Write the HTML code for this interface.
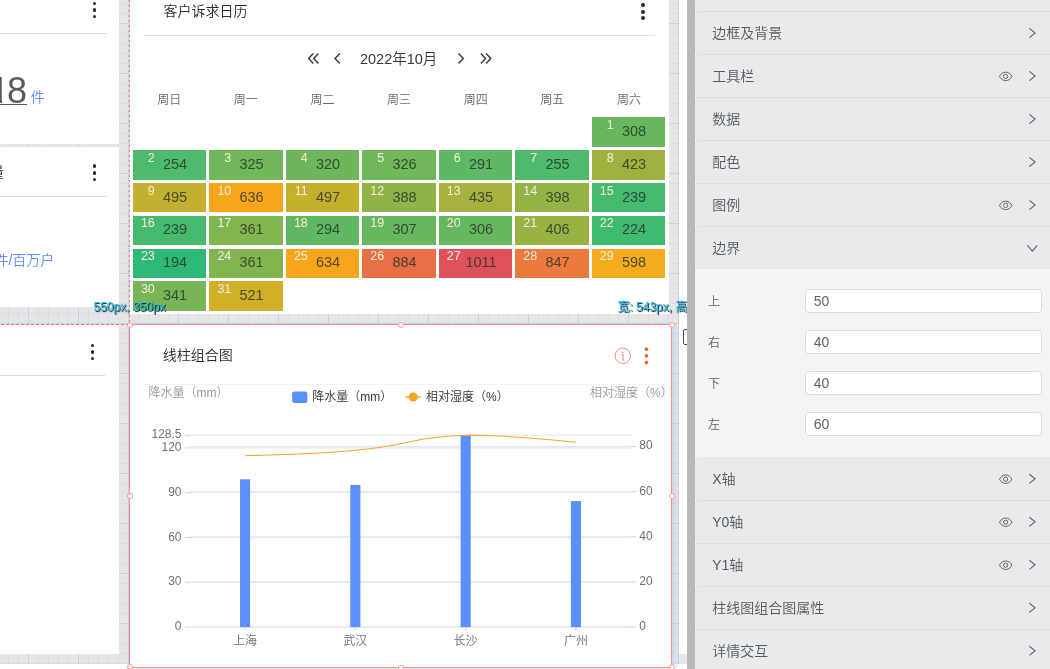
<!DOCTYPE html>
<html lang="zh-CN"><head><meta charset="utf-8"><title>dashboard</title>
<style>
*{box-sizing:border-box;margin:0;padding:0}
html,body{width:1050px;height:669px;overflow:hidden;background:#fff}
body{position:relative;font-family:"Liberation Sans","Noto Sans CJK SC",sans-serif;color:#333;font-weight:350}
#root{position:absolute;left:0;top:0;width:1050px;height:669px;overflow:hidden;will-change:transform}
.abs{position:absolute}
#canvas{position:absolute;left:0;top:0;width:679.2px;height:663.8px;background-color:#e6e6e6;
background-image:
 linear-gradient(to right,rgba(150,185,240,.3) 1px,transparent 1px),
 linear-gradient(to bottom,rgba(150,185,240,.3) 1px,transparent 1px),
 linear-gradient(to right,rgba(150,185,240,.185) 1px,transparent 1px),
 linear-gradient(to bottom,rgba(150,185,240,.185) 1px,transparent 1px);
background-size:50px 50px,50px 50px,10px 10px,10px 10px;
background-position:28px 0,0 23px,8px 0,0 3px;}
.card{position:absolute;background:#fff}
.dots{position:absolute;width:4px}
.dots i{position:absolute;left:-0.1px;width:3.8px;height:3.8px;margin-top:-0.1px;border-radius:50%;background:#2a2a1e}
.hr{position:absolute;height:1px;background:#dcdcdc}
.t14{position:absolute;font-size:14px;line-height:20px;white-space:nowrap}
.wk{position:absolute;width:60px;text-align:center;font-size:12px;line-height:16px;color:#666;top:91.8px}
.cell{position:absolute;width:73.6px;height:29.4px}
.dn{position:absolute;right:51.4px;top:0.7px;font-size:12.5px;line-height:14px;color:#f1f0dc;white-space:nowrap}
.dv{position:absolute;left:12.5px;width:60px;text-align:center;top:4.6px;font-size:14.5px;line-height:18px;color:rgba(35,48,40,.78);white-space:nowrap}
.tag{position:absolute;font-size:12px;line-height:14px;color:#22c0f2;white-space:nowrap;text-shadow:1px 1px 1px rgba(0,0,0,.95)}
.handle{position:absolute;width:6.2px;height:6.2px;border-radius:50%;background:#fff;border:1px solid #ff9a85}
svg{position:absolute;overflow:visible}
/* panel */
#gut1{position:absolute;left:679.2px;top:0;width:8px;height:669px;background:#fff;overflow:hidden}
#gut2{position:absolute;left:687.2px;top:0;width:7.7px;height:669px;background:#b9b9b9}
#panel{position:absolute;left:694.9px;top:0;width:355.1px;height:669px;background:#e9eaec;overflow:hidden}
.row{position:absolute;left:0;width:100%;height:43px;background:linear-gradient(#dedfe2,#dedfe2) 2.5px 0/100% 1px no-repeat}
.row::before{content:"";position:absolute;left:0;top:-2px;border-left:2.6px solid #f7f7f7;border-top:2.5px solid transparent;border-bottom:2.5px solid transparent}
.row.nl{background:none}
.row span{position:absolute;left:17.3px;top:12.4px;font-size:14px;line-height:20px;color:#55595f;white-space:nowrap}
.sec{position:absolute;left:0;width:100%;background:#f4f4f5}
.lab{position:absolute;left:13px;font-size:12px;line-height:16px;color:#606266}
.inp{position:absolute;left:110.3px;width:236.4px;height:23.6px;border:1px solid #d9dbdf;border-radius:4px;background:#fff;font-size:14px;line-height:21.6px;padding-top:.8px;padding-left:7.5px;color:#606266}

</style></head>
<body>
<div id="root">
<div id="canvas">
<!-- left cards -->
<div class="card" style="left:0;top:0;width:119.3px;height:144.3px">
  <div class="dots" style="left:92.7px;top:0"><i style="top:1.6px"></i><i style="top:8.2px"></i><i style="top:14.6px"></i></div>
  <div class="hr" style="left:0;top:33px;width:107px"></div>
  <div class="abs" style="left:0;top:70px;width:1.9px;height:42px;overflow:hidden"><div class="abs" style="left:-10.6px;top:0;font-size:36px;line-height:42px;color:#5a5a5a;white-space:nowrap">1</div></div>
  <div class="abs" style="left:7px;top:70px;font-size:36px;line-height:42px;color:#5a5a5a;white-space:nowrap">8</div>
  <div class="abs" style="left:0;top:103.9px;width:26.9px;height:1.2px;background:#5a5a5a"></div>
  <div class="abs" style="left:30.8px;top:87.5px;font-size:14px;line-height:18px;color:#5b8ff9">件</div>
</div>
<div class="card" style="left:0;top:146.6px;width:119.3px;height:160.2px">
  <div class="t14" style="left:-10px;top:15px;color:#222">量</div>
  <div class="dots" style="left:92.7px;top:0"><i style="top:17.8px"></i><i style="top:24.6px"></i><i style="top:31.2px"></i></div>
  <div class="hr" style="left:0;top:49px;width:107px"></div>
  <div class="t14" style="left:-5.6px;top:103px;color:#5b8ff9">件/百万户</div>
</div>
<div class="card" style="left:0;top:324.5px;width:119.3px;height:329.8px">
  <div class="dots" style="left:90.6px;top:0"><i style="top:19.1px"></i><i style="top:25.7px"></i><i style="top:32.1px"></i></div>
  <div class="hr" style="left:0;top:50.5px;width:105px"></div>
</div>
<!-- calendar card -->
<div class="card" style="left:129.5px;top:0;width:539.6px;height:314.1px"></div>
<div class="t14" style="left:163.5px;top:1px;color:#2b2b2b">客户诉求日历</div>
<div class="dots" style="left:640.8px;top:0"><i style="top:3.1px"></i><i style="top:9.8px"></i><i style="top:16.5px"></i></div>
<div class="hr" style="left:143px;top:35px;width:512px;background:#e2e2e2"></div>
<svg style="left:300px;top:48px" width="200" height="22" viewBox="300 48 200 22" fill="none" stroke="#3d4039" stroke-width="1.5">
  <path d="M313.2 53.5 L308.6 58.5 L313.2 63.5 M318.4 53.5 L313.8 58.5 L318.4 63.5"/>
  <path d="M339.9 53.5 L335 58.5 L339.9 63.5"/>
  <path d="M458.5 53.5 L463.4 58.5 L458.5 63.5"/>
  <path d="M480.9 53.5 L485.5 58.5 L480.9 63.5 M486.1 53.5 L490.7 58.5 L486.1 63.5"/>
</svg>
<div class="abs" style="left:338.7px;top:49px;width:120px;text-align:center;font-size:14.5px;line-height:20px;color:#353a35;white-space:nowrap">2022年10月</div>
<div class="wk" style="left:139.3px">周日</div>
<div class="wk" style="left:215.7px">周一</div>
<div class="wk" style="left:292.4px">周二</div>
<div class="wk" style="left:369px">周三</div>
<div class="wk" style="left:445.7px">周四</div>
<div class="wk" style="left:522.3px">周五</div>
<div class="wk" style="left:599px">周六</div>
<div class="cell" style="left:591.5px;top:117.4px;background:rgb(104,183,94)"><span class="dn">1</span><span class="dv">308</span></div>
<div class="cell" style="left:132.6px;top:150.2px;background:rgb(77,186,108)"><span class="dn">2</span><span class="dv">254</span></div>
<div class="cell" style="left:209.1px;top:150.2px;background:rgb(112,182,90)"><span class="dn">3</span><span class="dv">325</span></div>
<div class="cell" style="left:285.6px;top:150.2px;background:rgb(110,182,91)"><span class="dn">4</span><span class="dv">320</span></div>
<div class="cell" style="left:362.0px;top:150.2px;background:rgb(112,182,90)"><span class="dn">5</span><span class="dv">326</span></div>
<div class="cell" style="left:438.5px;top:150.2px;background:rgb(95,184,99)"><span class="dn">6</span><span class="dv">291</span></div>
<div class="cell" style="left:515.0px;top:150.2px;background:rgb(77,186,108)"><span class="dn">7</span><span class="dv">255</span></div>
<div class="cell" style="left:591.5px;top:150.2px;background:rgb(161,177,64)"><span class="dn">8</span><span class="dv">423</span></div>
<div class="cell" style="left:132.6px;top:183.0px;background:rgb(196,176,46)"><span class="dn">9</span><span class="dv">495</span></div>
<div class="cell" style="left:209.1px;top:183.0px;background:rgb(246,165,28)"><span class="dn">10</span><span class="dv">636</span></div>
<div class="cell" style="left:285.6px;top:183.0px;background:rgb(197,176,46)"><span class="dn">11</span><span class="dv">497</span></div>
<div class="cell" style="left:362.0px;top:183.0px;background:rgb(144,179,73)"><span class="dn">12</span><span class="dv">388</span></div>
<div class="cell" style="left:438.5px;top:183.0px;background:rgb(167,177,61)"><span class="dn">13</span><span class="dv">435</span></div>
<div class="cell" style="left:515.0px;top:183.0px;background:rgb(148,178,70)"><span class="dn">14</span><span class="dv">398</span></div>
<div class="cell" style="left:591.5px;top:183.0px;background:rgb(69,186,110)"><span class="dn">15</span><span class="dv">239</span></div>
<div class="cell" style="left:132.6px;top:215.8px;background:rgb(69,186,110)"><span class="dn">16</span><span class="dv">239</span></div>
<div class="cell" style="left:209.1px;top:215.8px;background:rgb(130,180,80)"><span class="dn">17</span><span class="dv">361</span></div>
<div class="cell" style="left:285.6px;top:215.8px;background:rgb(97,184,98)"><span class="dn">18</span><span class="dv">294</span></div>
<div class="cell" style="left:362.0px;top:215.8px;background:rgb(103,183,95)"><span class="dn">19</span><span class="dv">307</span></div>
<div class="cell" style="left:438.5px;top:215.8px;background:rgb(103,183,95)"><span class="dn">20</span><span class="dv">306</span></div>
<div class="cell" style="left:515.0px;top:215.8px;background:rgb(152,178,68)"><span class="dn">21</span><span class="dv">406</span></div>
<div class="cell" style="left:591.5px;top:215.8px;background:rgb(62,186,113)"><span class="dn">22</span><span class="dv">224</span></div>
<div class="cell" style="left:132.6px;top:248.6px;background:rgb(46,186,118)"><span class="dn">23</span><span class="dv">194</span></div>
<div class="cell" style="left:209.1px;top:248.6px;background:rgb(130,180,80)"><span class="dn">24</span><span class="dv">361</span></div>
<div class="cell" style="left:285.6px;top:248.6px;background:rgb(246,165,28)"><span class="dn">25</span><span class="dv">634</span></div>
<div class="cell" style="left:362.0px;top:248.6px;background:rgb(232,112,70)"><span class="dn">26</span><span class="dv">884</span></div>
<div class="cell" style="left:438.5px;top:248.6px;background:rgb(224,82,90)"><span class="dn">27</span><span class="dv">1011</span></div>
<div class="cell" style="left:515.0px;top:248.6px;background:rgb(236,122,62)"><span class="dn">28</span><span class="dv">847</span></div>
<div class="cell" style="left:591.5px;top:248.6px;background:rgb(245,171,30)"><span class="dn">29</span><span class="dv">598</span></div>
<div class="cell" style="left:132.6px;top:281.4px;background:rgb(120,181,86)"><span class="dn">30</span><span class="dv">341</span></div>
<div class="cell" style="left:209.1px;top:281.4px;background:rgb(209,175,40)"><span class="dn">31</span><span class="dv">521</span></div>
<!-- chart widget -->
<div class="card" style="left:129px;top:324px;width:543px;height:344.2px;border:1px solid #fc8a86;box-shadow:3px 2px 5px rgba(120,170,230,.25)"></div>
<div class="t14" style="left:162.7px;top:344.7px;color:#2b2b2b">线柱组合图</div>
<div class="hr" style="left:143px;top:384px;width:515px;background:#f4f4f4"></div>
<svg style="left:0;top:0" width="679" height="669" viewBox="0 0 679 669" font-family="Liberation Sans, Noto Sans CJK SC, sans-serif" font-size="12">
<circle cx="622.8" cy="355.8" r="7.7" fill="none" stroke="#ff7a76" stroke-width="0.9"/>
<path d="M621.6 354.3 H623 V360.2 H624.4" fill="none" stroke="#f4716c" stroke-width="0.9"/><circle cx="622.8" cy="352.4" r="0.7" fill="#f4716c"/>
<circle cx="646.5" cy="349.3" r="1.8" fill="#e2622a"/>
<circle cx="646.5" cy="355.9" r="1.8" fill="#e2622a"/>
<circle cx="646.5" cy="362.6" r="1.8" fill="#e2622a"/>
<path d="M189.8 627.1 H631.1" stroke="#e4e9f2" stroke-width="1.3"/>
<path d="M184.8 627.1 H189.8" stroke="#c9d3e4" stroke-width="1"/>
<text x="181.5" y="630.1" text-anchor="end" fill="#6e7079">0</text>
<path d="M189.8 582.3 H631.1" stroke="#e4e9f2" stroke-width="1.3"/>
<path d="M184.8 582.3 H189.8" stroke="#c9d3e4" stroke-width="1"/>
<text x="181.5" y="585.3" text-anchor="end" fill="#6e7079">30</text>
<path d="M189.8 537.5 H631.1" stroke="#e4e9f2" stroke-width="1.3"/>
<path d="M184.8 537.5 H189.8" stroke="#c9d3e4" stroke-width="1"/>
<text x="181.5" y="540.5" text-anchor="end" fill="#6e7079">60</text>
<path d="M189.8 492.7 H631.1" stroke="#e4e9f2" stroke-width="1.3"/>
<path d="M184.8 492.7 H189.8" stroke="#c9d3e4" stroke-width="1"/>
<text x="181.5" y="495.7" text-anchor="end" fill="#6e7079">90</text>
<path d="M189.8 447.9 H631.1" stroke="#e4e9f2" stroke-width="1.3"/>
<path d="M184.8 447.9 H189.8" stroke="#c9d3e4" stroke-width="1"/>
<text x="181.5" y="450.9" text-anchor="end" fill="#6e7079">120</text>
<path d="M189.8 435.2 H631.1" stroke="#e4e9f2" stroke-width="1.3"/>
<path d="M184.8 435.2 H189.8" stroke="#c9d3e4" stroke-width="1"/>
<text x="181.5" y="438.2" text-anchor="end" fill="#6e7079">128.5</text>
<path d="M189.8 627.1 H631.1" stroke="#e4e9f2" stroke-width="1.3"/>
<path d="M631.1 627.1 H636.1" stroke="#c9d3e4" stroke-width="1"/>
<text x="639.3" y="630.0" fill="#6e7079">0</text>
<path d="M189.8 581.9 H631.1" stroke="#e4e9f2" stroke-width="1.3"/>
<path d="M631.1 581.9 H636.1" stroke="#c9d3e4" stroke-width="1"/>
<text x="639.3" y="584.8" fill="#6e7079">20</text>
<path d="M189.8 536.8 H631.1" stroke="#e4e9f2" stroke-width="1.3"/>
<path d="M631.1 536.8 H636.1" stroke="#c9d3e4" stroke-width="1"/>
<text x="639.3" y="539.7" fill="#6e7079">40</text>
<path d="M189.8 491.6 H631.1" stroke="#e4e9f2" stroke-width="1.3"/>
<path d="M631.1 491.6 H636.1" stroke="#c9d3e4" stroke-width="1"/>
<text x="639.3" y="494.5" fill="#6e7079">60</text>
<path d="M189.8 446.5 H631.1" stroke="#e4e9f2" stroke-width="1.3"/>
<path d="M631.1 446.5 H636.1" stroke="#c9d3e4" stroke-width="1"/>
<text x="639.3" y="449.4" fill="#6e7079">80</text>
<path d="M245.0 627.1 V630.6" stroke="#c9d3e4" stroke-width="1"/>
<path d="M355.3 627.1 V630.6" stroke="#c9d3e4" stroke-width="1"/>
<path d="M465.6 627.1 V630.6" stroke="#c9d3e4" stroke-width="1"/>
<path d="M575.9 627.1 V630.6" stroke="#c9d3e4" stroke-width="1"/>
<rect x="240.0" y="479.3" width="10.1" height="147.8" fill="#5b8ff9"/>
<rect x="350.3" y="484.9" width="10.1" height="142.2" fill="#5b8ff9"/>
<rect x="460.6" y="435.2" width="10.1" height="191.9" fill="#5b8ff9"/>
<rect x="570.9" y="501.1" width="10.1" height="126.0" fill="#5b8ff9"/>
<path d="M245.0 455.7 C272.5 454.4 300.1 455.5 355.3 450.3 C410.5 445.2 410.5 437.3 465.6 435.2 C520.8 435.2 548.4 440.3 575.9 442.0" fill="none" stroke="#f2a72b" stroke-width="1.1"/>
<text x="245.0" y="645" text-anchor="middle" fill="#6e7079">上海</text>
<text x="355.3" y="645" text-anchor="middle" fill="#6e7079">武汉</text>
<text x="465.6" y="645" text-anchor="middle" fill="#6e7079">长沙</text>
<text x="575.9" y="645" text-anchor="middle" fill="#6e7079">广州</text>
<text x="148.6" y="397.2" fill="#9a9a9a">降水量（mm）</text>
<text x="672.7" y="397.2" text-anchor="end" fill="#9a9a9a">相对湿度（%）</text>
<rect x="292.1" y="391.4" width="15.3" height="11.6" rx="2.5" fill="#5b8ff9"/>
<text x="312.3" y="400.8" fill="#333">降水量（mm）</text>
<path d="M405.7 397.1 H420.6" stroke="#f2a72b" stroke-width="1.6"/><circle cx="413.2" cy="397.1" r="4.6" fill="#f2a72b"/>
<text x="426" y="400.8" fill="#333">相对湿度（%）</text>
</svg>
<div class="abs" style="left:128.9px;top:0;width:1.5px;height:324.5px;background:repeating-linear-gradient(to bottom,#ff6e6e 0,#ff6e6e 2.3px,transparent 2.3px,transparent 5px)"></div>
<div class="abs" style="left:0;top:323.8px;width:129.5px;height:1.4px;background:repeating-linear-gradient(to right,transparent 0,transparent 1.2px,#ff6e6e 1.2px,#ff6e6e 3.6px,transparent 3.6px,transparent 5px)"></div>
<div class="handle" style="left:126.7px;top:321.6px"></div>
<div class="handle" style="left:397.6px;top:321.6px"></div>
<div class="handle" style="left:668.8px;top:321.8px"></div>
<div class="handle" style="left:126.7px;top:492.7px"></div>
<div class="handle" style="left:668.8px;top:492.7px"></div>
<div class="handle" style="left:126.7px;top:664.0px"></div>
<div class="handle" style="left:397.6px;top:665.1px"></div>
<div class="handle" style="left:668.8px;top:664.0px"></div>
<div class="tag" style="left:93.5px;top:300px">550px, 350px</div>
</div><!-- /canvas -->
<div id="gut1"><div class="abs" style="left:0;top:654px;width:8px;height:9.8px;background:#e6e6e6"></div><div class="abs" style="left:3.8px;top:329px;width:12px;height:15.6px;border:1.3px solid #4a4a4a;border-radius:2px"></div></div>
<div id="gut2"></div>
<div class="abs" style="left:0;top:0;width:687.1px;height:669px;overflow:hidden"><div class="tag" style="left:617.4px;top:300px">宽: 543px, 高: 343px</div></div>
<div id="panel">
<div class="row" style="top:-32.2px"></div>
<div class="row" style="top:10.8px"><span>边框及背景</span></div>
<div class="row" style="top:53.8px"><span>工具栏</span></div>
<div class="row" style="top:96.8px"><span>数据</span></div>
<div class="row" style="top:139.8px"><span>配色</span></div>
<div class="row" style="top:182.8px"><span>图例</span></div>
<div class="row" style="top:225.8px"><span>边界</span></div>
<div class="sec" style="top:268.6px;height:188.4px">
  <div class="lab" style="top:25.2px">上</div><div class="inp" style="top:20.6px">50</div>
  <div class="lab" style="top:66.2px">右</div><div class="inp" style="top:61.6px">40</div>
  <div class="lab" style="top:107.2px">下</div><div class="inp" style="top:102.6px">40</div>
  <div class="lab" style="top:148.2px">左</div><div class="inp" style="top:143.6px">60</div>
</div>
<div class="row nl" style="top:456.6px"><span>X轴</span></div>
<div class="row" style="top:499.6px"><span>Y0轴</span></div>
<div class="row" style="top:542.6px"><span>Y1轴</span></div>
<div class="row" style="top:585.6px"><span>柱线图组合图属性</span></div>
<div class="row" style="top:628.6px"><span>详情交互</span></div>
<svg style="left:0;top:0" width="355" height="669" viewBox="694.9 0 355 669" fill="none" stroke="#5f636a" stroke-width="1.1">
<path d="M1029.3 28.4 L1035 33.0 L1029.3 37.6"/>
<path d="M1029.3 71.4 L1035 76.0 L1029.3 80.6"/>
<path stroke-width="1" d="M999.4 76.4 C1000.7 73.7 1002.9 72.2 1005.6 72.2 C1008.3 72.2 1010.5 73.7 1011.8 76.4 C1010.5 79.1 1008.3 80.6 1005.6 80.6 C1002.9 80.6 1000.7 79.1 999.4 76.4 Z"/><circle stroke-width="1" cx="1005.5" cy="76.4" r="2.1"/>
<path d="M1029.3 114.4 L1035 119.0 L1029.3 123.6"/>
<path d="M1029.3 157.4 L1035 162.0 L1029.3 166.6"/>
<path d="M1029.3 200.4 L1035 205.0 L1029.3 209.6"/>
<path stroke-width="1" d="M999.4 205.4 C1000.7 202.7 1002.9 201.2 1005.6 201.2 C1008.3 201.2 1010.5 202.7 1011.8 205.4 C1010.5 208.1 1008.3 209.6 1005.6 209.6 C1002.9 209.6 1000.7 208.1 999.4 205.4 Z"/><circle stroke-width="1" cx="1005.5" cy="205.4" r="2.1"/>
<path d="M1029.3 474.2 L1035 478.8 L1029.3 483.4"/>
<path stroke-width="1" d="M999.4 479.2 C1000.7 476.5 1002.9 475.0 1005.6 475.0 C1008.3 475.0 1010.5 476.5 1011.8 479.2 C1010.5 481.9 1008.3 483.4 1005.6 483.4 C1002.9 483.4 1000.7 481.9 999.4 479.2 Z"/><circle stroke-width="1" cx="1005.5" cy="479.2" r="2.1"/>
<path d="M1029.3 517.2 L1035 521.8 L1029.3 526.4"/>
<path stroke-width="1" d="M999.4 522.2 C1000.7 519.5 1002.9 518.0 1005.6 518.0 C1008.3 518.0 1010.5 519.5 1011.8 522.2 C1010.5 524.9 1008.3 526.4 1005.6 526.4 C1002.9 526.4 1000.7 524.9 999.4 522.2 Z"/><circle stroke-width="1" cx="1005.5" cy="522.2" r="2.1"/>
<path d="M1029.3 560.2 L1035 564.8 L1029.3 569.4"/>
<path stroke-width="1" d="M999.4 565.2 C1000.7 562.5 1002.9 561.0 1005.6 561.0 C1008.3 561.0 1010.5 562.5 1011.8 565.2 C1010.5 567.9 1008.3 569.4 1005.6 569.4 C1002.9 569.4 1000.7 567.9 999.4 565.2 Z"/><circle stroke-width="1" cx="1005.5" cy="565.2" r="2.1"/>
<path d="M1029.3 603.2 L1035 607.8 L1029.3 612.4"/>
<path d="M1029.3 646.2 L1035 650.8 L1029.3 655.4"/>
<path d="M1027.3 245.4 L1032.2 251.2 L1037.1 245.4"/>
</svg>
</div>
</div>
</body></html>
